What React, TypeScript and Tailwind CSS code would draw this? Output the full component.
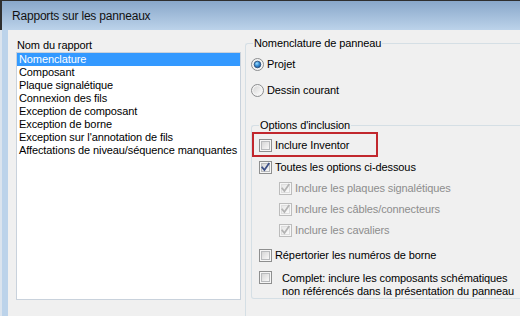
import { useId, type ReactNode } from 'react';

const reports = [
  'Nomenclature',
  'Composant',
  'Plaque signalétique',
  'Connexion des fils',
  'Exception de composant',
  'Exception de borne',
  "Exception sur l'annotation de fils",
  'Affectations de niveau/séquence manquantes',
];

function CheckBox({ checked = false, disabled = false }: { checked?: boolean; disabled?: boolean }) {
  const id = useId();
  return (
    <svg width="13" height="13" viewBox="0 0 13 13" className="shrink-0">
      <defs>
        <linearGradient id={id} x1="0" y1="0" x2="1" y2="1">
          <stop offset="0" stopColor={disabled ? '#e6e6e6' : '#d4d4d4'} />
          <stop offset="1" stopColor="#fbfbfb" />
        </linearGradient>
      </defs>
      <rect x="0.5" y="0.5" width="12" height="12" fill="#f6f6f6" stroke={disabled ? '#bcbcbc' : '#8e8f8f'} />
      <rect x="2.5" y="2.5" width="8" height="8" fill={`url(#${id})`} stroke={disabled ? '#dedede' : '#b9bbbd'} />
      {checked && (
        <path
          d="M3.2 6.4 L5.4 9 L9.8 2.8"
          fill="none"
          stroke={disabled ? '#b3b3b3' : '#3c4f86'}
          strokeWidth="1.7"
          strokeLinecap="square"
        />
      )}
    </svg>
  );
}

function Radio({ checked = false }: { checked?: boolean }) {
  const id = useId();
  return (
    <svg width="13" height="13" viewBox="0 0 13 13" className="shrink-0">
      <defs>
        <linearGradient id={`${id}a`} x1="0" y1="0" x2="1" y2="1">
          <stop offset="0" stopColor="#d6d6d6" />
          <stop offset="1" stopColor="#fdfdfd" />
        </linearGradient>
        <radialGradient id={`${id}b`} cx="0.4" cy="0.35" r="0.7">
          <stop offset="0" stopColor="#9fe0ff" />
          <stop offset="0.5" stopColor="#3a8fd6" />
          <stop offset="1" stopColor="#1a4f8a" />
        </radialGradient>
      </defs>
      <circle cx="6.5" cy="6.5" r="6" fill="#f4f4f4" stroke="#8a8c8e" />
      <circle cx="6.5" cy="6.5" r="4.3" fill={`url(#${id}a)`} />
      {checked && <circle cx="6.5" cy="6.5" r="3.3" fill={`url(#${id}b)`} stroke="#2a4a75" strokeWidth="0.8" />}
    </svg>
  );
}

function Group({ label, children, className = '' }: { label: string; children: ReactNode; className?: string }) {
  return (
    <div className={`flex flex-col ${className}`}>
      <div className="flex h-[13px]">
        <div className="w-[8px] h-[7px] self-end border-l border-t border-[#d5dfe5] rounded-tl-[3px]" />
        <span className="px-[1px] leading-[13px] whitespace-nowrap">{label}</span>
        <div className="flex-1 h-px mt-[6px] bg-[#d5dfe5]" />
      </div>
      <div className="flex-1 flex flex-col border-l border-r border-b border-[#d5dfe5] rounded-b-[3px]">{children}</div>
    </div>
  );
}

function Option({
  label,
  checked,
  disabled,
  sub,
}: {
  label: string;
  checked?: boolean;
  disabled?: boolean;
  sub?: boolean;
}) {
  return (
    <div className={`flex items-center h-[21px] ${sub ? 'pl-[27px]' : 'pl-[7px]'}`}>
      <CheckBox checked={checked} disabled={disabled} />
      <span className={`ml-[3px] whitespace-nowrap ${disabled ? 'text-[#8d8d8d]' : ''}`}>{label}</span>
    </div>
  );
}

export default function App() {
  return (
    <div className="w-[520px] h-[316px] overflow-hidden bg-[#f0f0f0] text-[11px] tracking-[-0.1px] text-black font-['Liberation_Sans',Arial,sans-serif]">
      {/* title bar */}
      <div className="h-[30px] flex items-center pl-[10px] border-t border-l-2 border-[#2f2f2f] bg-gradient-to-b from-[#89a7ca] to-[#bcd3ea]">
        <span className="text-[12px] tracking-[-0.2px] text-[#111]">Rapports sur les panneaux</span>
      </div>

      <div className="flex h-[286px]">
        <div className="w-[2px] bg-[#dbe4ee]" />
        <div className="w-[6px] bg-[#bcd3ea]" />

        <div className="flex-1 flex pl-[8px] overflow-hidden">
          {/* report list */}
          <div className="w-[225px] shrink-0 flex flex-col pt-[9px]">
            <div className="h-[13px] leading-[13px] pl-[1px]">Nom du rapport</div>
            <div className="h-[248px] bg-white border border-[#c9d2dc]">
              {reports.map((r, i) => (
                <div
                  key={r}
                  className={`h-[13px] leading-[13px] px-[2px] whitespace-nowrap ${
                    i === 0 ? 'bg-[#3399ff] text-white' : ''
                  }`}
                >
                  {r}
                </div>
              ))}
            </div>
          </div>

          {/* right side */}
          <Group label="Nomenclature de panneau" className="ml-[4px] mt-[7px] w-[300px] shrink-0 h-[300px]">
            <div className="flex flex-col pl-[5px] pt-[8px]">
              <div className="flex items-center h-[13px]">
                <Radio checked />
                <span className="ml-[3px]">Projet</span>
              </div>
              <div className="flex items-center h-[13px] mt-[13px]">
                <Radio />
                <span className="ml-[3px]">Dessin courant</span>
              </div>

              <Group label="Options d'inclusion" className="mt-[22px] h-[179px]">
                <div className="flex">
                  <div className="flex items-center w-[126px] h-[25px] pl-[5px] pt-[2px] border-2 border-[#c1272d]">
                    <CheckBox />
                    <span className="ml-[3px] whitespace-nowrap">Inclure Inventor</span>
                  </div>
                </div>
                <Option label="Toutes les options ci-dessous" checked />
                <Option label="Inclure les plaques signalétiques" checked disabled sub />
                <Option label="Inclure les câbles/connecteurs" checked disabled sub />
                <Option label="Inclure les cavaliers" checked disabled sub />
                <div className="mt-[4px]">
                  <Option label="Répertorier les numéros de borne" />
                </div>
                <div className="flex items-start pl-[7px] mt-[5px]">
                  <CheckBox />
                  <div className="ml-[10px] leading-[13px] mt-[1px]">
                    <div className="whitespace-nowrap">Complet: inclure les composants schématiques</div>
                    <div className="whitespace-nowrap">non référencés dans la présentation du panneau</div>
                  </div>
                </div>
              </Group>
            </div>
          </Group>
        </div>
      </div>
    </div>
  );
}
